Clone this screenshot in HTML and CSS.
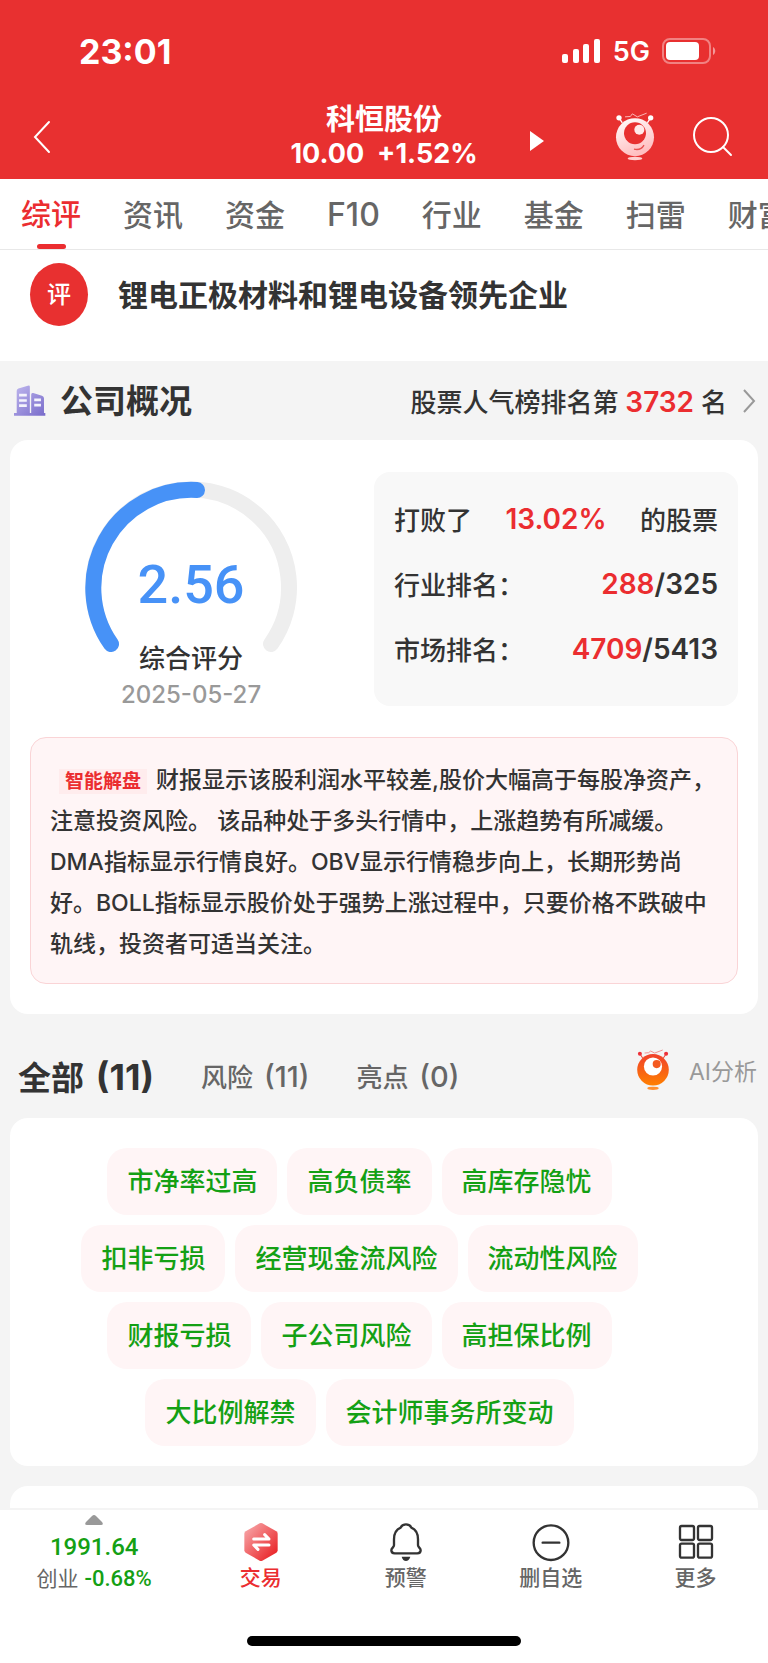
FILE: index.html
```
<!DOCTYPE html>
<html lang="zh-CN">
<head>
<meta charset="utf-8">
<meta name="viewport" content="width=device-width, initial-scale=1">
<title>科恒股份</title>
<link rel="stylesheet" href="styles.css">
</head>
<body>
<div class="app">
  <header class="header">
    <div class="status">
      <span class="status-time">23:01</span>
      <div class="status-right">
        <svg class="signal" viewBox="0 0 39 24" aria-hidden="true"><rect x="0" y="15" width="6" height="9" rx="2"/><rect x="11" y="10" width="6" height="14" rx="2"/><rect x="21" y="5" width="6" height="19" rx="2"/><rect x="32" y="0" width="6" height="24" rx="2"/></svg>
        <span class="network">5G</span>
        <svg class="battery" viewBox="0 0 54 26" aria-hidden="true"><rect x="1" y="1" width="47" height="24" rx="7" fill="none" stroke="#fff" stroke-opacity=".4" stroke-width="2"/><rect x="4" y="4" width="33" height="18" rx="4" fill="#fff"/><path d="M51 9c3 2 3 6 0 8z" fill="#fff" fill-opacity=".5"/></svg>
      </div>
    </div>
    <div class="nav">
      <div class="nav-left">
        <button class="icon-btn" type="button" aria-label="返回"><svg class="back" viewBox="0 0 20 34"><path d="M17 2 3 17l14 15"/></svg></button>
      </div>
      <div class="stock">
        <h1 class="stock-name">科恒股份</h1>
        <div class="stock-quote"><span>10.00</span><span>+1.52%</span></div>
      </div>
      <div class="nav-right">
        <button class="icon-btn next" type="button" aria-label="下一只"><svg class="play" viewBox="0 0 14 20"><path d="M0 0 14 10 0 20z"/></svg></button>
        <button class="icon-btn" type="button" aria-label="助手">
          <svg class="robot" viewBox="0 0 120 146">
            <defs><linearGradient id="rw" x1="0" y1="0" x2=".4" y2="1"><stop offset="0" stop-color="#fff"/><stop offset="1" stop-color="#ffbfc1"/></linearGradient></defs>
            <path d="M12 17 22 32M107 17 97 32" stroke="#fff" stroke-width="4"/>
            <circle cx="12" cy="17" r="8" fill="#fff"/><circle cx="107" cy="17" r="8" fill="#fff"/>
            <path d="M30 14 46 13 52 5 67 14 95 3" fill="none" stroke="#ffd0d0" stroke-width="2.5"/>
            <circle cx="60" cy="75" r="57" fill="url(#rw)"/>
            <circle cx="60" cy="63" r="33" fill="#e83030"/><circle cx="73" cy="53" r="15" fill="#ffe9e9"/>
            <path d="M57 111c13 3 24-1 30-12" fill="none" stroke="#e85050" stroke-width="4"/>
            <ellipse cx="60" cy="139" rx="22" ry="5" fill="#ffd0d0"/>
          </svg>
        </button>
        <button class="icon-btn" type="button" aria-label="搜索"><svg class="search" viewBox="0 0 40 40"><circle cx="18" cy="18" r="17"/><path d="m30 30 8 8"/></svg></button>
      </div>
    </div>
  </header>

  <nav class="tabs">
    <a class="tab tab-on" href="#">综评</a>
    <a class="tab" href="#">资讯</a>
    <a class="tab" href="#">资金</a>
    <a class="tab tab-latin" href="#">F10</a>
    <a class="tab" href="#">行业</a>
    <a class="tab" href="#">基金</a>
    <a class="tab" href="#">扫雷</a>
    <a class="tab" href="#">财富</a>
  </nav>

  <main class="content">
    <section class="summary">
      <span class="summary-badge">评</span>
      <p class="summary-text">锂电正极材料和锂电设备领先企业</p>
    </section>

    <div class="section-head">
      <svg class="building" viewBox="0 0 96 98" aria-hidden="true">
        <defs><linearGradient id="bd" x1="0" y1="0" x2="1" y2="1"><stop offset="0" stop-color="#bfb7ee"/><stop offset="1" stop-color="#786bca"/></linearGradient></defs>
        <path d="M10 20q0-5 5-7l28-8q6-2 6 3v78h4V32q0-7 6-5l26 8q6 2 6 7v44h4v8H2v-8h8z" fill="url(#bd)"/>
        <path d="M17 29h23v8H17zM17 45h23v8H17zM17 60h23v8H17zM62 43h20v8H62zM62 59h20v8H62z" fill="#f4f3fc"/>
      </svg>
      <h2 class="section-title">公司概况</h2>
      <a class="rank-link" href="#">
        <span>股票人气榜排名第 <b class="num red">3732</b> 名</span>
        <svg class="chevron" viewBox="0 0 13 24" aria-hidden="true"><path d="m1 1 10 11L1 23"/></svg>
      </a>
    </div>

    <section class="card overview">
      <div class="overview-top">
        <div class="gauge">
          <svg class="gauge-arc" viewBox="0 0 216 172" aria-hidden="true">
            <path d="M28 164A98 98 0 1 1 188 164" stroke="#eee"/>
            <path d="M28 164A98 98 0 0 1 114 10" stroke="#4792f7"/>
          </svg>
          <div class="gauge-text">
            <strong class="score">2.56</strong>
            <span class="score-label">综合评分</span>
            <time class="score-date">2025-05-27</time>
          </div>
        </div>
        <div class="ranks">
          <div class="rank-row"><span>打败了</span><span class="num red">13.02%</span><span>的股票</span></div>
          <div class="rank-row"><span>行业排名：</span><span class="num"><span class="red">288</span>/325</span></div>
          <div class="rank-row"><span>市场排名：</span><span class="num"><span class="red">4709</span>/5413</span></div>
        </div>
      </div>
      <p class="insight"><span class="insight-tag">智能解盘</span>财报显示该股利润水平较差,股价大幅高于每股净资产，注意投资风险。 该品种处于多头行情中，上涨趋势有所减缓。DMA指标显示行情良好。OBV显示行情稳步向上，长期形势尚好。BOLL指标显示股价处于强势上涨过程中，只要价格不跌破中轨线，投资者可适当关注。</p>
    </section>

    <div class="filters">
      <button class="filter filter-on" type="button">全部 <span class="count">(11)</span></button>
      <button class="filter" type="button">风险 <span class="count">(11)</span></button>
      <button class="filter" type="button">亮点 <span class="count">(0)</span></button>
      <a class="ai" href="#">
        <svg class="ai-icon" viewBox="0 0 100 125" aria-hidden="true">
          <defs><linearGradient id="ro" x1="0" y1="0" x2="0" y2="1"><stop offset="0" stop-color="#f0402c"/><stop offset="1" stop-color="#ff8000"/></linearGradient></defs>
          <path d="M11 14 20 28M89 14 80 28" stroke="#ee4a3c" stroke-width="3"/>
          <circle cx="11" cy="14" r="6" fill="#ee3038"/><circle cx="89" cy="14" r="6" fill="#ee3038"/>
          <path d="M25 12 37 11 43 6 55 12 79 3" fill="none" stroke="#f08080" stroke-width="2.5"/>
          <circle cx="50" cy="62" r="47" fill="url(#ro)"/>
          <circle cx="50" cy="52" r="27" fill="#fff"/><circle cx="61" cy="45" r="12" fill="#f45a20"/>
          <ellipse cx="50" cy="117" rx="17" ry="5" fill="#ff9030"/>
        </svg>
        AI分析
      </a>
    </div>

    <section class="card chips">
      <button class="chip" type="button">市净率过高</button>
      <button class="chip" type="button">高负债率</button>
      <button class="chip" type="button">高库存隐忧</button>
      <button class="chip" type="button">扣非亏损</button>
      <button class="chip" type="button">经营现金流风险</button>
      <button class="chip" type="button">流动性风险</button>
      <button class="chip" type="button">财报亏损</button>
      <button class="chip" type="button">子公司风险</button>
      <button class="chip" type="button">高担保比例</button>
      <button class="chip" type="button">大比例解禁</button>
      <button class="chip" type="button">会计师事务所变动</button>
    </section>

    <section class="card more-card"></section>
  </main>

  <footer class="bottom">
    <div class="toolbar">
      <button class="index" type="button">
        <svg class="caret" viewBox="0 0 18 10" aria-hidden="true"><path d="M7 1q2-2 4 0l6 6q2 3-1 3H2q-3 0-1-3z"/></svg>
        <span class="index-value">1991.64</span>
        <span class="index-change">创业 <span class="din">-0.68%</span></span>
      </button>
      <button class="tool tool-on" type="button">
        <svg class="tool-icon" viewBox="0 0 120 120" aria-hidden="true">
          <defs><linearGradient id="hx" x1="0" y1="0" x2="1" y2="1"><stop offset="0" stop-color="#f8b0b2"/><stop offset="1" stop-color="#e81418"/></linearGradient></defs>
          <path d="M56 4q4-2 8 0l42 24q4 3 4 7v50q0 4-4 7l-42 24q-4 2-8 0L14 92q-4-3-4-7V35q0-4 4-7z" fill="url(#hx)"/>
          <path d="M38 51h46L71 38M84 69H38l13 13" fill="none" stroke="#fff" stroke-width="9" stroke-linecap="round" stroke-linejoin="round"/>
        </svg>
        交易
      </button>
      <button class="tool" type="button">
        <svg class="tool-icon line" viewBox="-8 0 120 120" aria-hidden="true"><path d="M52 7C42 7 38 12 36 17 24 22 16 35 16 52V70C16 76 8 78 8 85 8 91 12 94 18 94H86C92 94 96 91 96 85 96 78 88 76 88 70V52C88 35 80 22 68 17 66 12 62 7 52 7Z"/><path class="solid" d="M39 104H65C63 112 57 117 52 117 46 117 41 112 39 104Z"/></svg>
        预警
      </button>
      <button class="tool" type="button">
        <svg class="tool-icon line" viewBox="0 0 120 120" aria-hidden="true"><circle cx="60" cy="62" r="52"/><path d="M35 62h50"/></svg>
        删自选
      </button>
      <button class="tool" type="button">
        <svg class="tool-icon line" viewBox="0 0 120 120" aria-hidden="true"><rect x="12" y="12" width="42" height="42" rx="5"/><rect x="66" y="12" width="42" height="42" rx="5"/><rect x="12" y="65" width="42" height="42" rx="5"/><rect x="66" y="65" width="42" height="42" rx="5"/></svg>
        更多
      </button>
    </div>
    <div class="home-bar"></div>
  </footer>
</div>
</body>
</html>
```
FILE: styles.css
```
* { box-sizing: border-box; }
body {
  margin: 0;
  color: #333;
  background: #f4f4f4;
  font-family: Inter, "Noto Sans CJK SC", sans-serif;
  font-size: 26px;
  font-weight: 500;
}
h1, h2, p { margin: 0; }
a { color: inherit; text-decoration: none; }
button { margin: 0; padding: 0; border: 0; background: none; color: inherit; font: inherit; }
svg { display: block; flex: none; }
.red { color: #eb2d30; }
.num { font-size: 28px; font-weight: 600; }

.app { display: flex; flex-direction: column; height: 100vh; }

.header { flex: none; background: #e83030; color: #fff; }
.status {
  display: flex;
  align-items: center;
  justify-content: space-between;
  height: 102px;
  padding: 0 52px 0 79px;
}
.status-time { font-size: 34px; font-weight: 700; }
.status-right { display: flex; align-items: center; gap: 12px; }
.signal { width: 39px; height: 24px; fill: #fff; }
.network { font-size: 27px; font-weight: 600; }
.battery { width: 54px; height: 26px; }
.nav {
  display: grid;
  grid-template-columns: 1fr auto 1fr;
  align-items: center;
  height: 77px;
  padding-bottom: 9px;
}
.icon-btn { display: block; }
.nav-left { padding-left: 32px; }
.back { width: 20px; height: 34px; }
.back path, .search { fill: none; stroke: #fff; stroke-width: 2; stroke-linecap: round; }
.stock { text-align: center; }
.stock-name { font-size: 29px; font-weight: 700; line-height: 35px; }
.stock-quote { display: flex; justify-content: center; gap: 13px; font-size: 27px; font-weight: 700; line-height: 34px; }
.nav-right { display: flex; align-items: center; gap: 38px; padding: 0 35px 0 52px; }
.next { margin-right: auto; padding-top: 8px; }
.play { width: 14px; height: 20px; fill: #fff; }
.robot { width: 40px; height: 49px; }
.search { width: 40px; height: 40px; }

.tabs {
  display: flex;
  flex: none;
  gap: 42px;
  height: 71px;
  padding: 0 21px;
  overflow: hidden;
  background: #fff;
  border-bottom: 1px solid #e8e8e8;
}
.tab {
  display: flex;
  flex: none;
  flex-direction: column;
  align-items: center;
  color: #666;
  font-size: 30px;
  line-height: 72px;
  white-space: nowrap;
}
.tab-latin { font-size: 32px; }
.tab-on { padding-top: 5px; color: #eb2d30; line-height: 60px; }
.tab-on::after { content: ""; width: 29px; height: 5px; border-radius: 3px; background: #eb2d30; }

.content { flex: 1; min-height: 0; overflow: hidden auto; scrollbar-width: none; }
.summary {
  display: flex;
  align-items: flex-start;
  gap: 30px;
  padding: 13px 30px 33px;
  background: #fff;
}
.summary-badge {
  flex: none;
  width: 58px;
  border-radius: 50%;
  background: #e83030;
  color: #fff;
  font-size: 24px;
  line-height: 63px;
  text-align: center;
}
.summary-text { font-size: 30px; font-weight: 700; line-height: 65px; }

.section-head { display: flex; align-items: center; height: 79px; padding: 0 12px 0 13px; }
.building { width: 33px; height: 33px; }
.section-title { margin-left: 14px; padding-bottom: 4px; font-size: 33px; font-weight: 700; }
.rank-link { display: flex; align-items: center; gap: 16px; margin-left: auto; }
.chevron { width: 13px; height: 24px; fill: none; stroke: #999; stroke-width: 2; }

.card { margin: 0 10px; border-radius: 18px; background: #fff; }
.overview { padding: 32px 20px 30px; }
.overview-top { display: flex; align-items: flex-start; justify-content: space-between; }
.gauge { width: 322px; padding-top: 8px; }
.gauge-arc { width: 216px; height: 172px; margin: 0 auto; fill: none; stroke-width: 16; stroke-linecap: round; }
.gauge-arc path { fill: none; }
.gauge-text { display: flex; flex-direction: column; align-items: center; margin-top: -100px; }
.score { color: #4792f7; font: 500 54px/66px Roboto, sans-serif; }
.score-label { margin-top: 22px; line-height: 38px; }
.score-date { color: #999; font-size: 24px; line-height: 34px; }
.ranks {
  display: flex;
  flex-direction: column;
  width: 364px;
  height: 234px;
  padding: 14px 20px;
  border-radius: 16px;
  background: #f8f8f8;
}
.rank-row { display: flex; align-items: center; justify-content: space-between; height: 65px; }
.insight {
  margin-top: 25px;
  padding: 22px 19px 18px;
  border: 1px solid #fad4d6;
  border-radius: 16px;
  background: #fff5f6;
  font-size: 23px;
  line-height: 41px;
}
.insight-tag {
  display: inline-block;
  margin: 0 9px;
  padding: 0 6px;
  background: #ffeced;
  color: #eb2d30;
  font-size: 19px;
  font-weight: 700;
  line-height: 25px;
}

.filters { display: flex; align-items: center; height: 104px; padding: 22px 11px 0 18px; }
.filter { margin-right: 47px; color: #666; line-height: 56px; }
.filter .count { margin-left: 4px; font-size: 29px; }
.filter-on { color: #333; font-size: 33px; font-weight: 700; }
.filter-on .count { font-size: 36px; }
.ai { display: flex; align-items: center; gap: 19px; margin-left: auto; padding-bottom: 14px; color: #999; font-size: 23px; font-weight: 400; }
.ai-icon { width: 34px; height: 42px; }

.chips {
  display: flex;
  flex-wrap: wrap;
  justify-content: center;
  gap: 10px;
  padding: 30px 99px 20px 50px;
}
.chip {
  padding: 0 20px;
  border-radius: 20px;
  background: #fff5f6;
  color: #14a014;
  line-height: 67px;
}
.more-card { height: 300px; margin-top: 20px; }

.bottom { flex: none; background: #fff; border-top: 2px solid #f4f4f4; }
.toolbar { display: grid; grid-template-columns: 13fr 10fr 10fr 10fr 10fr; height: 126px; color: #666; font-size: 21px; line-height: 32px; }
.index { display: flex; flex-direction: column; align-items: center; padding-top: 5px; }
.caret { width: 18px; height: 10px; fill: #999; }
.index-value { margin-top: 6px; color: #14a014; font: 500 24px/32px Roboto, sans-serif; }
.index-change { font-weight: 400; line-height: 32px; }
.din { color: #14a014; font: 500 22px Roboto, sans-serif; }
.tool { display: flex; flex-direction: column; align-items: center; padding-top: 12px; }
.tool-on { color: #eb2d30; }
.tool-icon { width: 40px; height: 40px; }
.line { fill: none; stroke: #333; stroke-width: 7; stroke-linecap: round; stroke-linejoin: round; }
.solid { fill: #333; stroke: none; }
.home-bar { width: 274px; height: 10px; margin: 0 auto 17px; border-radius: 5px; background: #000; }
```
